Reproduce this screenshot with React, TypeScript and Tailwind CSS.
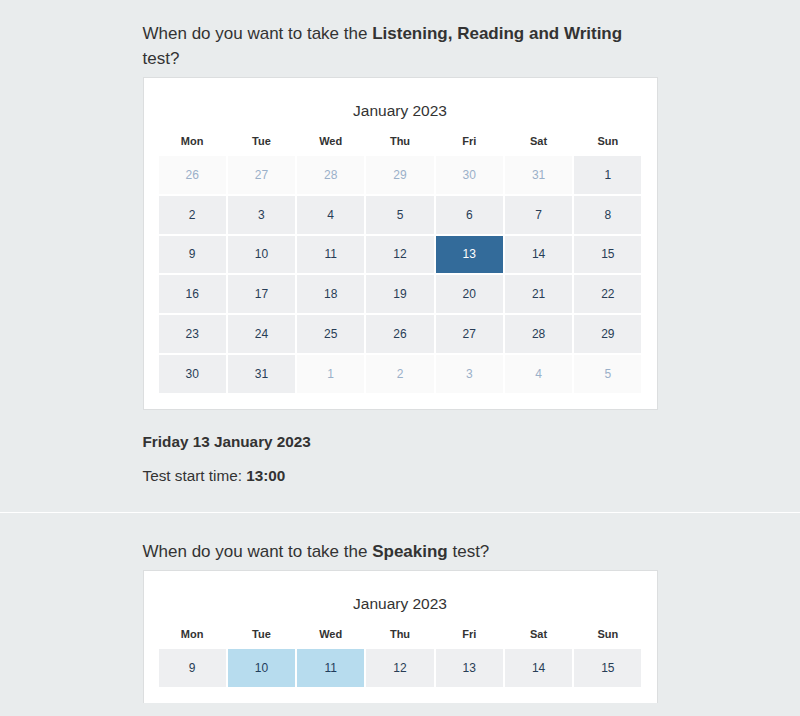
import React from "react";

type Cell = { d: number; kind: "out" | "in" | "sel" | "hl" };

const days = ["Mon", "Tue", "Wed", "Thu", "Fri", "Sat", "Sun"];

function Calendar({ cells, last }: { cells: Cell[]; last?: boolean }) {
  return (
    <div
      className={
        "bg-white border border-[#dcdedf] px-[15px] pt-[23px] " +
        (last ? "border-b-0 pb-[16px]" : "pb-[16px]")
      }
    >
      <div className="text-center text-[15.5px] leading-[20px] text-[#333] mb-[8px]">January 2023</div>
      <div className="grid grid-cols-7 gap-x-[2px] h-[24px] mb-[3px]">
        {days.map((d) => (
          <div key={d} className="flex items-center justify-center text-[11px] font-bold text-[#333]">
            {d}
          </div>
        ))}
      </div>
      <div className="grid grid-cols-7 gap-[2px]">
        {cells.map((c, i) => {
          const cls =
            c.kind === "out"
              ? "bg-[#fafafa] text-[#9ab0c9]"
              : c.kind === "sel"
              ? "bg-[#336b9a] text-white"
              : c.kind === "hl"
              ? "bg-[#b7dcee] text-[#1f3d5c]"
              : "bg-[#eeeff1] text-[#283d56]";
          return (
            <div key={i} className={"h-[37.8px] flex items-center justify-center text-[12px] " + cls}>
              {c.d}
            </div>
          );
        })}
      </div>
    </div>
  );
}

export default function App() {
  const cells1: Cell[] = [];
  [26, 27, 28, 29, 30, 31].forEach((d) => cells1.push({ d, kind: "out" }));
  for (let d = 1; d <= 31; d++) cells1.push({ d, kind: d === 13 ? "sel" : "in" });
  [1, 2, 3, 4, 5].forEach((d) => cells1.push({ d, kind: "out" }));

  const cells2: Cell[] = [];
  for (let d = 9; d <= 15; d++) cells2.push({ d, kind: d === 10 || d === 11 ? "hl" : "in" });

  return (
    <div
      className="w-[800px] h-[716px] overflow-hidden bg-[#e9eced] text-[#333]"
      style={{ fontFamily: '"Liberation Sans", Arial, sans-serif' }}
    >
      <div className="pt-[21px] pb-[26px] border-b border-white">
        <div className="w-[515px] mx-auto">
          <h2 className="text-[17px] leading-[25px] font-normal mb-[6px]">
            When do you want to take the <b>Listening, Reading and Writing</b> test?
          </h2>
          <Calendar cells={cells1} />
          <div className="mt-[22px] text-[15.3px] leading-[20px] font-bold">Friday 13 January 2023</div>
          <div className="mt-[14px] text-[15.3px] leading-[20px]">
            Test start time: <b>13:00</b>
          </div>
        </div>
      </div>
      <div className="pt-[26px]">
        <div className="w-[515px] mx-auto">
          <h2 className="text-[17px] leading-[25px] font-normal mb-[6px]">
            When do you want to take the <b>Speaking</b> test?
          </h2>
          <Calendar cells={cells2} last />
        </div>
      </div>
    </div>
  );
}
